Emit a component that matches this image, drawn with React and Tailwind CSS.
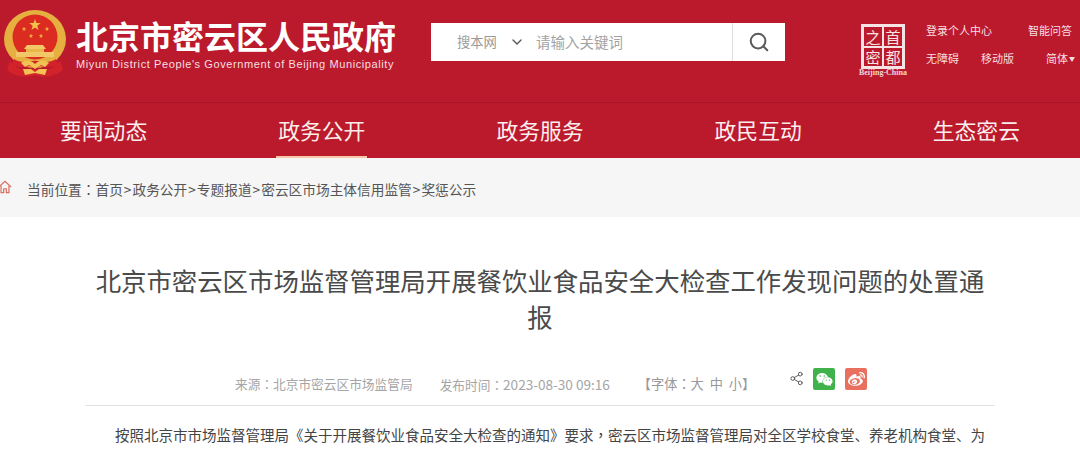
import React from 'react';
import { ChevronDown, Search, Share2 } from 'lucide-react';
import { FaWeixin, FaWeibo } from 'react-icons/fa';

const cjk = '"Noto Sans CJK SC", "Liberation Sans", sans-serif';

const navItems = ['要闻动态', '政务公开', '政务服务', '政民互动', '生态密云'];
const crumbs = ['政务公开', '专题报道', '密云区市场主体信用监管', '奖惩公示'];

const star = (cx, cy, r) => {
  const pts = [];
  for (let i = 0; i < 10; i++) {
    const a = (Math.PI / 5) * i - Math.PI / 2;
    const rad = i % 2 === 0 ? r : r * 0.4;
    pts.push(`${(cx + rad * Math.cos(a)).toFixed(1)},${(cy + rad * Math.sin(a)).toFixed(1)}`);
  }
  return pts.join(' ');
};

// centred full-width punctuation, as the TC face draws it
const Punct = ({ children }) => <span className="font-['Noto_Sans_CJK_TC',sans-serif]">{children}</span>;

const Emblem = () => (
  <svg viewBox="0 0 72 80" className="w-[72px] h-[80px] shrink-0">
    <path d="M10 60 C18 70 26 70 35 68 C44 70 52 70 60 60 L63 69 C54 76 44 77 35 74 C26 77 16 76 7 69 Z" fill="#d3232a" />
    <ellipse cx="35" cy="38" rx="31" ry="29" fill="#e6b040" />
    <circle cx="35" cy="36" r="22.5" fill="#dc2c22" />
    <polygon points={star(35, 24, 6)} fill="#f4c24a" />
    <polygon points={star(24, 28, 2.4)} fill="#f0b840" />
    <polygon points={star(31, 35, 2.4)} fill="#f0b840" />
    <polygon points={star(41, 35, 2.4)} fill="#f0b840" />
    <polygon points={star(47, 28, 2.4)} fill="#f0b840" />
    <path d="M27 44 L43 44 L46 48 L24 48 Z" fill="#f1c768" />
    <rect x="26" y="48" width="18" height="3" fill="#e8b64a" />
    <rect x="16" y="51" width="38" height="5" fill="#f1c768" />
    <path d="M14 58 C20 62 24 60 28 62 C31 59 39 59 42 62 C46 60 50 62 56 58 L58 64 C50 67 44 66 40 65 L35 68 L30 65 C26 66 20 67 12 64 Z" fill="#d3232a" />
    <path d="M21 62 C26 58 31 59 35 63 C39 59 44 58 49 62 L45 66 L41 64 L35 68 L29 64 L25 66 Z" fill="#f2c253" />
    <path d="M23 68 L31 68 L35 71 L39 68 L47 68 L45 74 L35 72 L25 74 Z" fill="#f2c253" />
  </svg>
);

const Seal = () => (
  <div className="flex flex-col items-center w-[52px]">
    <div className="grid grid-cols-2 w-[44px] h-[45px] border-[3px] border-[#f6e3e3] bg-[#f6e3e3] gap-[2px]">
      {['之', '首', '密', '都'].map((t) => (
        <div key={t} className="bg-[#bb1a2d] flex items-center justify-center text-[15px] leading-none text-[#f6e3e3]">
          {t}
        </div>
      ))}
    </div>
    <div className="text-[8px] leading-[9px] mt-[-1px] font-bold text-[#f3d8d8] whitespace-nowrap font-['Liberation_Serif',serif]">Beijing-China</div>
  </div>
);

export default function App() {
  return (
    <div className="h-[453px] overflow-hidden bg-white" style={{ fontFamily: cjk }}>
      <div className="bg-[#bb1a2d]">
        <div className="h-[103px] flex border-b border-[#a81627]">
          <div className="w-[431px] shrink-0 flex pt-[1px]">
            <Emblem />
            <div className="pt-[15px] pl-[4px]">
              <div className="text-[32px] leading-[38px] font-bold text-white whitespace-nowrap">北京市密云区人民政府</div>
              <div className="mt-[3px] text-[11px] leading-[14px] tracking-[0.6px] text-[#f6dfe1] whitespace-nowrap font-['Liberation_Sans',sans-serif]">
                Miyun District People's Government of Beijing Municipality
              </div>
            </div>
          </div>
          <div className="mt-[23px] w-[354px] h-[38px] bg-white flex items-center shrink-0">
            <div className="w-[301px] flex items-center pl-[26px]">
              <span className="text-[13.3px] text-[#9a9a9a]">搜本网</span>
              <ChevronDown size={16} strokeWidth={2} className="ml-[12px] text-[#555]" />
              <span className="ml-[11px] text-[14.5px] text-[#a3a3a3]">请输入关键词</span>
            </div>
            <div className="flex-1 h-full border-l border-[#ddd] flex items-center justify-center">
              <Search size={22} strokeWidth={2.2} className="text-[#5a5a5a]" />
            </div>
          </div>
          <div className="pl-[72px] pt-[24px]">
            <Seal />
          </div>
          <div className="pl-[17px] pt-[21px] text-[11px] text-[#f6dfe1]">
            <div className="flex h-[18px] items-center whitespace-nowrap">
              <span className="w-[102px]">登录个人中心</span>
              <span>智能问答</span>
            </div>
            <div className="flex h-[18px] mt-[10px] items-center whitespace-nowrap">
              <span className="w-[55px]">无障碍</span>
              <span className="w-[65px]">移动版</span>
              <span>简体</span>
              <span className="text-[6px] ml-[1px]">▼</span>
            </div>
          </div>
        </div>
        <div className="h-[55px] flex justify-between pl-[60px] pr-[60px]">
          {navItems.map((item, i) => (
            <div key={item} className={`relative flex items-center h-full text-[21.8px] whitespace-nowrap ${i === 1 ? 'text-[#fdeee8]' : 'text-[#fbeeee]'}`}>
              {item}
              {i === 1 && <div className="absolute left-[-2px] right-[-2px] bottom-0 h-[2px] bg-[#f8c6a6]" />}
            </div>
          ))}
        </div>
      </div>

      <div className="h-[59px] bg-[#f6f6f6] flex items-center pt-[4px] text-[13.7px] text-[#555] whitespace-nowrap">
        <svg viewBox="0 0 16 16" className="w-[14px] h-[14px] ml-[-2px] mb-[5px] text-[#d9705f]" fill="none" stroke="currentColor" strokeWidth="1.4">
          <path d="M1 8 L8 1.5 L15 8" />
          <path d="M3.5 6.5 V14.5 H6.5 V10 H9.5 V14.5 H12.5 V6.5" />
        </svg>
        <span className="ml-[15px]">
          当前位置<Punct>：</Punct>首页
          {crumbs.map((c) => (
            <span key={c}><span className="mx-[1px]">&gt;</span>{c}</span>
          ))}
        </span>
      </div>

      <div className="w-[910px] ml-[85px]">
        <h1 className="pt-[45px] text-[25.4px] leading-[36px] text-center font-normal text-[#4a4a4a]">
          北京市密云区市场监督管理局开展餐饮业食品安全大检查工作发现问题的处置通报
        </h1>
        <div className="h-[72px] border-b border-[#e2e2e2] flex items-start text-[12.7px] text-[#a5a5a5] whitespace-nowrap">
          <span className="ml-[150px] mt-[40px] leading-[20px]">来源<Punct>：</Punct>北京市密云区市场监管局</span>
          <span className="ml-[27px] mt-[40px] leading-[20px]">发布时间<Punct>：</Punct><span className="text-[13.6px]">2023-08-30 09:16</span></span>
          <span className="ml-[28px] mt-[40px] leading-[20px] text-[13.2px] text-[#999]">【字体<Punct>：</Punct>大&nbsp;&nbsp;中&nbsp;&nbsp;小】</span>
          <Share2 size={15} strokeWidth={1.5} className="ml-[34px] mt-[37px] text-[#555]" />
          <div className="ml-[9px] mt-[34px] w-[22px] h-[22px] rounded-[2px] bg-[#3fb24b] flex items-center justify-center">
            <FaWeixin size={17} className="text-white" />
          </div>
          <div className="ml-[10px] mt-[34px] w-[22px] h-[22px] rounded-[2px] bg-[#e9705f] flex items-center justify-center">
            <FaWeibo size={17} className="text-white" />
          </div>
        </div>
        <p className="pl-[30px] pt-[16px] text-[14.5px] leading-[26px] text-[#444] whitespace-nowrap">
          按照北京市市场监督管理局《关于开展餐饮业食品安全大检查的通知》要求<Punct>，</Punct>密云区市场监督管理局对全区学校食堂、养老机构食堂、为
        </p>
      </div>
    </div>
  );
}
